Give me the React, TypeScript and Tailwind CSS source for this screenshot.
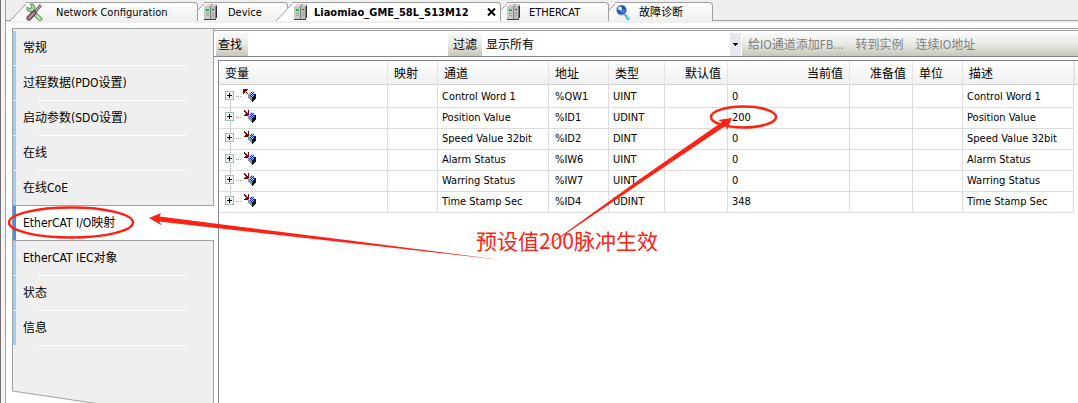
import clsx from "clsx";

interface Channel {
  name: string;
  address: string;
  type: string;
  current: string;
  output?: boolean;
}

const channels: Channel[] = [
  { name: "Control Word 1", address: "%QW1", type: "UINT", current: "0", output: true },
  { name: "Position Value", address: "%ID1", type: "UDINT", current: "200" },
  { name: "Speed Value 32bit", address: "%ID2", type: "DINT", current: "0" },
  { name: "Alarm Status", address: "%IW6", type: "UINT", current: "0" },
  { name: "Warring Status", address: "%IW7", type: "UINT", current: "0" },
  { name: "Time Stamp Sec", address: "%ID4", type: "UDINT", current: "348" },
];

const columns = [
  { label: "变量", width: "w-[169px]" },
  { label: "映射", width: "w-[50px]" },
  { label: "通道", width: "w-[111px]" },
  { label: "地址", width: "w-[60px]" },
  { label: "类型", width: "w-[56px]" },
  { label: "默认值", width: "w-[63px]", right: true },
  { label: "当前值", width: "w-[122px]", right: true },
  { label: "准备值", width: "w-[63px]", right: true },
  { label: "单位", width: "w-[50px]" },
  { label: "描述", width: "w-[111px]" },
];

const pages = [
  "常规",
  "过程数据(PDO设置)",
  "启动参数(SDO设置)",
  "在线",
  "在线CoE",
  "EtherCAT I/O映射",
  "EtherCAT IEC对象",
  "状态",
  "信息",
];
const activePage = 5;

function ToolsIcon() {
  return (
    <svg width="18" height="18" viewBox="0 0 18 18" className="shrink-0">
      <path d="M5 7 L14 16" stroke="#5f8f5f" strokeWidth="4.5" strokeLinecap="round" />
      <path d="M5 7 L14 16" stroke="#b4e6a4" strokeWidth="2.5" strokeLinecap="round" />
      <path d="M4 1 L6 4 L4 6 L1 4 L1 7 L4 9 L8 8 L9 4 L7 1 Z" fill="#a4dc94" stroke="#5f8f5f" />
      <path d="M8 10 L15 2" stroke="#6b5a64" strokeWidth="3" />
      <path d="M9 9 L15 2" stroke="#d8d4d8" />
      <path d="M3 15 L8 10" stroke="#6e4456" strokeWidth="5" strokeLinecap="round" />
      <path d="M3 15 L8 10" stroke="#b991a2" strokeWidth="2" strokeLinecap="round" />
    </svg>
  );
}

function DeviceIcon() {
  return (
    <svg width="14" height="16" viewBox="0 0 14 16" shapeRendering="crispEdges" className="shrink-0">
      <path d="M1 2 L3 0 H13 V13 L11 15 H1 Z" fill="#9b9b9b" />
      <path d="M1 2 L3 0 H7 V2 Z M7 2 L9 0 H13 L11 2 Z" fill="#d8d8d8" />
      <rect x="0" y="2" width="6" height="13" fill="#c8c8c8" />
      <rect x="7" y="2" width="4" height="13" fill="#bcbcbc" />
      <path d="M6 2h1v13h-1z M11 2h1v13h-1z" fill="#808080" />
      <path d="M12 2 L13 1 V13 L12 15 Z" fill="#303030" />
      <rect x="0" y="15" width="12" height="1" fill="#404040" />
      <rect x="2" y="5" width="3" height="2" fill="#00b020" />
      <rect x="3" y="5" width="2" height="1" fill="#20ff40" />
      <rect x="8" y="5" width="2" height="1" fill="#d01010" />
      <path d="M2 9h3v1h-3z M2 11h3v1h-3z M8 9h2v1h-2z M8 11h2v1h-2z" fill="#a4a4a4" />
    </svg>
  );
}

function SearchIcon() {
  return (
    <svg width="16" height="17" viewBox="0 0 16 17" className="shrink-0">
      <path d="M9 10 L12 13" stroke="#8898b8" strokeWidth="2" />
      <path d="M11 12 L14 16" stroke="#5ccbe8" strokeWidth="3" />
      <circle cx="6.5" cy="6" r="5.5" fill="#9db4dc" />
      <circle cx="6.5" cy="6" r="4.5" fill="#1f48b0" />
      <circle cx="7.5" cy="7" r="2.5" fill="#3d7be0" />
      <circle cx="5" cy="4.5" r="2" fill="#dcecff" />
    </svg>
  );
}

function ChannelIcon({ output }: { output?: boolean }) {
  return (
    <svg width="16" height="14" viewBox="0 0 16 14" shapeRendering="crispEdges">
      {output ? (
        <path d="M1 0h5v1h-1v1h-1v1h1v1h1v1h-1v-1h-1v-1h-1v1h-1v1h-1z" fill="#800000" />
      ) : (
        <path d="M2 0h1v1h1v1h1v1h1v-3h1v6h-5v-1h1v-1h1v-1h-1v-1h-1z" fill="#800000" />
      )}
      <path d="M10 1 L14 6 L10 9 L6 6 Z" fill="#b8d0e8" />
      <path d="M6 5 L10 8 V13 L6 9 Z" fill="#7f94a4" />
      <path d="M10 8 L14 5 V9 L10 13 Z" fill="#101820" />
      <path d="M9 3h1v1h-1z M11 3h1v1h-1z M8 4h1v1h-1z M10 4h1v1h-1z M9 5h1v1h-1z M11 5h1v1h-1z M8 6h1v1h-1z M10 6h1v1h-1z M12 5h1v1h-1z M9 7h1v1h-1z" fill="#0020ff" />
    </svg>
  );
}

function ExpandIcon({ first, last }: { first: boolean; last: boolean }) {
  return (
    <svg width="17" height="20" viewBox="0 0 17 20" shapeRendering="crispEdges">
      {!first && <path d="M5.5 0V5" stroke="#a0a0a0" strokeDasharray="1 1" />}
      {!last && <path d="M5.5 14V20" stroke="#a0a0a0" strokeDasharray="1 1" />}
      <path d="M11 9.5H16" stroke="#a0a0a0" strokeDasharray="1 1" />
      <rect x="0.5" y="4.5" width="8" height="8" fill="#f2f2ee" stroke="#9fb8bc" />
      <path d="M2 8.5H7M4.5 6V11" stroke="#000" />
    </svg>
  );
}

interface TabProps {
  label: string;
  icon: React.ReactNode;
  width: string;
  gap: string;
  first?: boolean;
  active?: boolean;
}

function Tab({ label, icon, width, gap, first, active }: TabProps) {
  const wide = first || active;
  return (
    <button
      role="tab"
      aria-selected={!!active}
      className={clsx("flex h-[19px] shrink-0 text-left", width, active && "relative z-10 -ml-3")}
    >
      {wide ? (
        <svg width="20" height="19" viewBox="0 0 20 19" className="-mr-1 shrink-0">
          <path d="M0 19 L2 17 L14 4 Q17 0.5 20 0.5 V19 Z" fill={active ? "#fff" : "#f8f8f8"} />
          <path d="M0 18.5 L2 17 L14 4 Q17 0.5 20 0.5" fill="none" stroke="#a0a0a0" />
        </svg>
      ) : (
        <svg width="10" height="19" viewBox="0 0 10 19" className="-mr-1 shrink-0">
          <path d="M0 8 L5 3 Q8 0.5 10 0.5 V19 H0 Z" fill="#f8f8f8" />
          <path d="M0 8 L5 3 Q8 0.5 10 0.5" fill="none" stroke="#a0a0a0" />
        </svg>
      )}
      <span
        className={clsx(
          "flex min-w-0 grow items-center rounded-tr-sm border-t border-r border-[#a0a0a0] whitespace-nowrap",
          gap,
          active ? "bg-white font-bold" : "bg-linear-to-b from-white to-[#efefef]",
        )}
      >
        {icon}
        <span className="grow pt-0.5">{label}</span>
        {active && (
          <svg width="9" height="8" viewBox="0 0 9 8" className="mr-1 shrink-0">
            <path d="M1 0.5 L8 7.5 M8 0.5 L1 7.5" stroke="#000" strokeWidth="2" />
          </svg>
        )}
      </span>
    </button>
  );
}

function TabBar() {
  return (
    <div className="bg-[#efefef] pt-0.5">
      <div role="tablist" className="flex h-[19px] border-b border-[#a0a0a0] pl-1">
        <Tab first width="w-[188px]" gap="gap-3" icon={<ToolsIcon />} label="Network Configuration" />
        <Tab width="w-[90px]" gap="gap-2.5" icon={<DeviceIcon />} label="Device" />
        <Tab active width="w-[225px]" gap="gap-1.5 pl-0.5" icon={<DeviceIcon />} label="Liaomiao_GME_58L_S13M12" />
        <Tab width="w-[108px]" gap="gap-2" icon={<DeviceIcon />} label="ETHERCAT" />
        <Tab width="w-[104px]" gap="gap-2" icon={<SearchIcon />} label="故障诊断" />
      </div>
      <div className="h-0.5" />
    </div>
  );
}

function Sidebar() {
  return (
    <nav className="flex w-[202px] shrink-0 flex-col text-xs">
      <div className="h-0.5 shrink-0 border-r border-l border-[#a0a0a0] bg-[#efefef]" />
      {pages.map((page, i) => {
        const active = i === activePage;
        const beforeActive = i === activePage - 1;
        return (
          <a
            key={page}
            href="#"
            aria-current={active ? "page" : undefined}
            className={clsx(
              "flex h-[35px] shrink-0 flex-col border-l border-l-[#a0a0a0]",
              active ? "bg-white" : "border-r border-r-[#a0a0a0] bg-[#efefef]",
              (active || beforeActive) && "border-b border-b-[#a0a0a0]",
            )}
          >
            <span
              className={clsx(
                "flex grow items-center border-l-3 pl-[7px]",
                active ? "border-[#3396ff]" : "border-[#99ccff]",
              )}
            >
              {page}
            </span>
            {!active && !beforeActive && <span className="mr-[26px] ml-[25px] h-px bg-white" />}
          </a>
        );
      })}
      <svg width="202" height="76" viewBox="0 0 202 76" className="shrink-0">
        <path d="M0.5 0 V45 L201.5 75 V0 Z" fill="#efefef" />
        <path d="M0.5 0 V45 L201.5 75 V0" fill="none" stroke="#a0a0a0" />
      </svg>
    </nav>
  );
}

function Toolbar() {
  const bar = "bg-linear-to-b from-[#fafafa] via-[#e8e8e4] to-[#c6c7b8]";
  return (
    <div className="flex h-[26px] shrink-0 border-b border-[#84849c] pt-0.5 pl-0.5 text-xs">
      <label htmlFor="find" className={clsx("flex w-8 shrink-0 items-center pl-0.5", bar)}>
        查找
      </label>
      <input id="find" type="text" className="w-[200px] shrink-0 bg-white px-1 outline-none" />
      <label htmlFor="filter" className={clsx("flex w-[34px] shrink-0 items-center justify-center", bar)}>
        过滤
      </label>
      <div className="relative w-[260px] shrink-0">
        <select id="filter" className="h-full w-full appearance-none bg-white pl-1 outline-none">
          <option>显示所有</option>
        </select>
        <span className="pointer-events-none absolute inset-y-0 right-px flex w-[11px] items-center justify-center bg-[#e6e6f0]">
          <svg width="5" height="3" viewBox="0 0 5 3" shapeRendering="crispEdges">
            <path d="M0 0h5v1h-1v1h-1v1h-1v-1h-1v-1h-1z" />
          </svg>
        </span>
      </div>
      <div className={clsx("flex min-w-0 grow gap-3 pl-1.5 whitespace-nowrap text-[#808080]", bar)}>
        <button>给IO通道添加FB...</button>
        <button>转到实例</button>
        <button>连续IO地址</button>
      </div>
    </div>
  );
}

function MappingTable() {
  const cell = "border-r border-b border-[#dcdcdc] px-1";
  return (
    <div className="mt-[3px] ml-[4px] grow border-t border-l border-[#84848f]">
      <table className="w-full table-fixed border-separate border-spacing-0 whitespace-nowrap">
        <thead className="text-xs">
          <tr>
            {columns.map((col) => (
              <th
                key={col.label}
                className={clsx(
                  "h-6 border-r border-b border-r-[#e4e4e4] border-b-[#d0d0d0] bg-linear-to-b from-white to-[#f0f0f0] px-1.5 pt-0.5 pb-0 font-normal",
                  col.width,
                  col.right ? "text-right" : "text-left",
                )}
              >
                {col.label}
              </th>
            ))}
            <td className="border-b border-l border-b-[#d0d0d0] border-l-[#e4e4e4] bg-linear-to-b from-white to-[#f0f0f0]" />
          </tr>
        </thead>
        <tbody className="leading-5">
          {channels.map((ch, i) => {
            const td = clsx(cell, i === 0 ? "pt-0.5" : "pt-0", "pb-0");
            return (
              <tr key={ch.name}>
                <td className={td}>
                  <span className="flex h-5 items-start pl-0.5">
                    <ExpandIcon first={i === 0} last={i === channels.length - 1} />
                    <span className="pt-0.5">
                      <ChannelIcon output={ch.output} />
                    </span>
                  </span>
                </td>
                <td className={td} />
                <td className={td}>{ch.name}</td>
                <td className={clsx(td, "pl-1.5")}>{ch.address}</td>
                <td className={td}>{ch.type}</td>
                <td className={td} />
                <td className={td}>{ch.current}</td>
                <td className={td} />
                <td className={td} />
                <td className={td}>{ch.name}</td>
              </tr>
            );
          })}
        </tbody>
      </table>
    </div>
  );
}

// Red pen marks lying over the editor
function Annotations() {
  return (
    <svg
      width="1078"
      height="403"
      viewBox="0 0 1078 403"
      className="pointer-events-none absolute top-0 left-0 z-20 font-['Noto_Sans_CJK_SC',sans-serif]"
    >
      <g fill="none" stroke="#fd2013" strokeWidth="2.5">
        <ellipse cx="71" cy="222.5" rx="62" ry="15" />
        <ellipse cx="743.5" cy="117" rx="32.5" ry="10.5" />
      </g>
      <g fill="#fd2013">
        <path d="M149 218 L161 213 L159.500 216.500 L350 240.500 L502 260 L350 243 L159 221.500 L162 225.500 Z" />
        <path d="M732 118 L718 120 L722 122 L640 179 L536 254 L642 182 L726 125.500 L727 130 Z" />
        <text x="476" y="249" fontSize="21">
          预设值200脉冲生效
        </text>
      </g>
    </svg>
  );
}

export default function App() {
  return (
    <div className="relative flex h-screen overflow-hidden bg-white font-['DejaVu_Sans_Condensed','Noto_Sans_CJK_SC',sans-serif] text-[11px] text-black">
      <div className="w-[6px] shrink-0 border-r border-l border-r-[#a0a0a0] border-l-[#707070] bg-[#f4f4f4]" />
      <div className="flex min-w-0 grow flex-col">
        <TabBar />
        <div className="mt-[5px] ml-[6px] flex min-h-0 grow border-t border-[#a0a0a0]">
          <Sidebar />
          <main className="mt-px flex min-w-0 grow flex-col border-t border-[#a0a0a0]">
            <Toolbar />
            <MappingTable />
          </main>
        </div>
      </div>
      <Annotations />
    </div>
  );
}
